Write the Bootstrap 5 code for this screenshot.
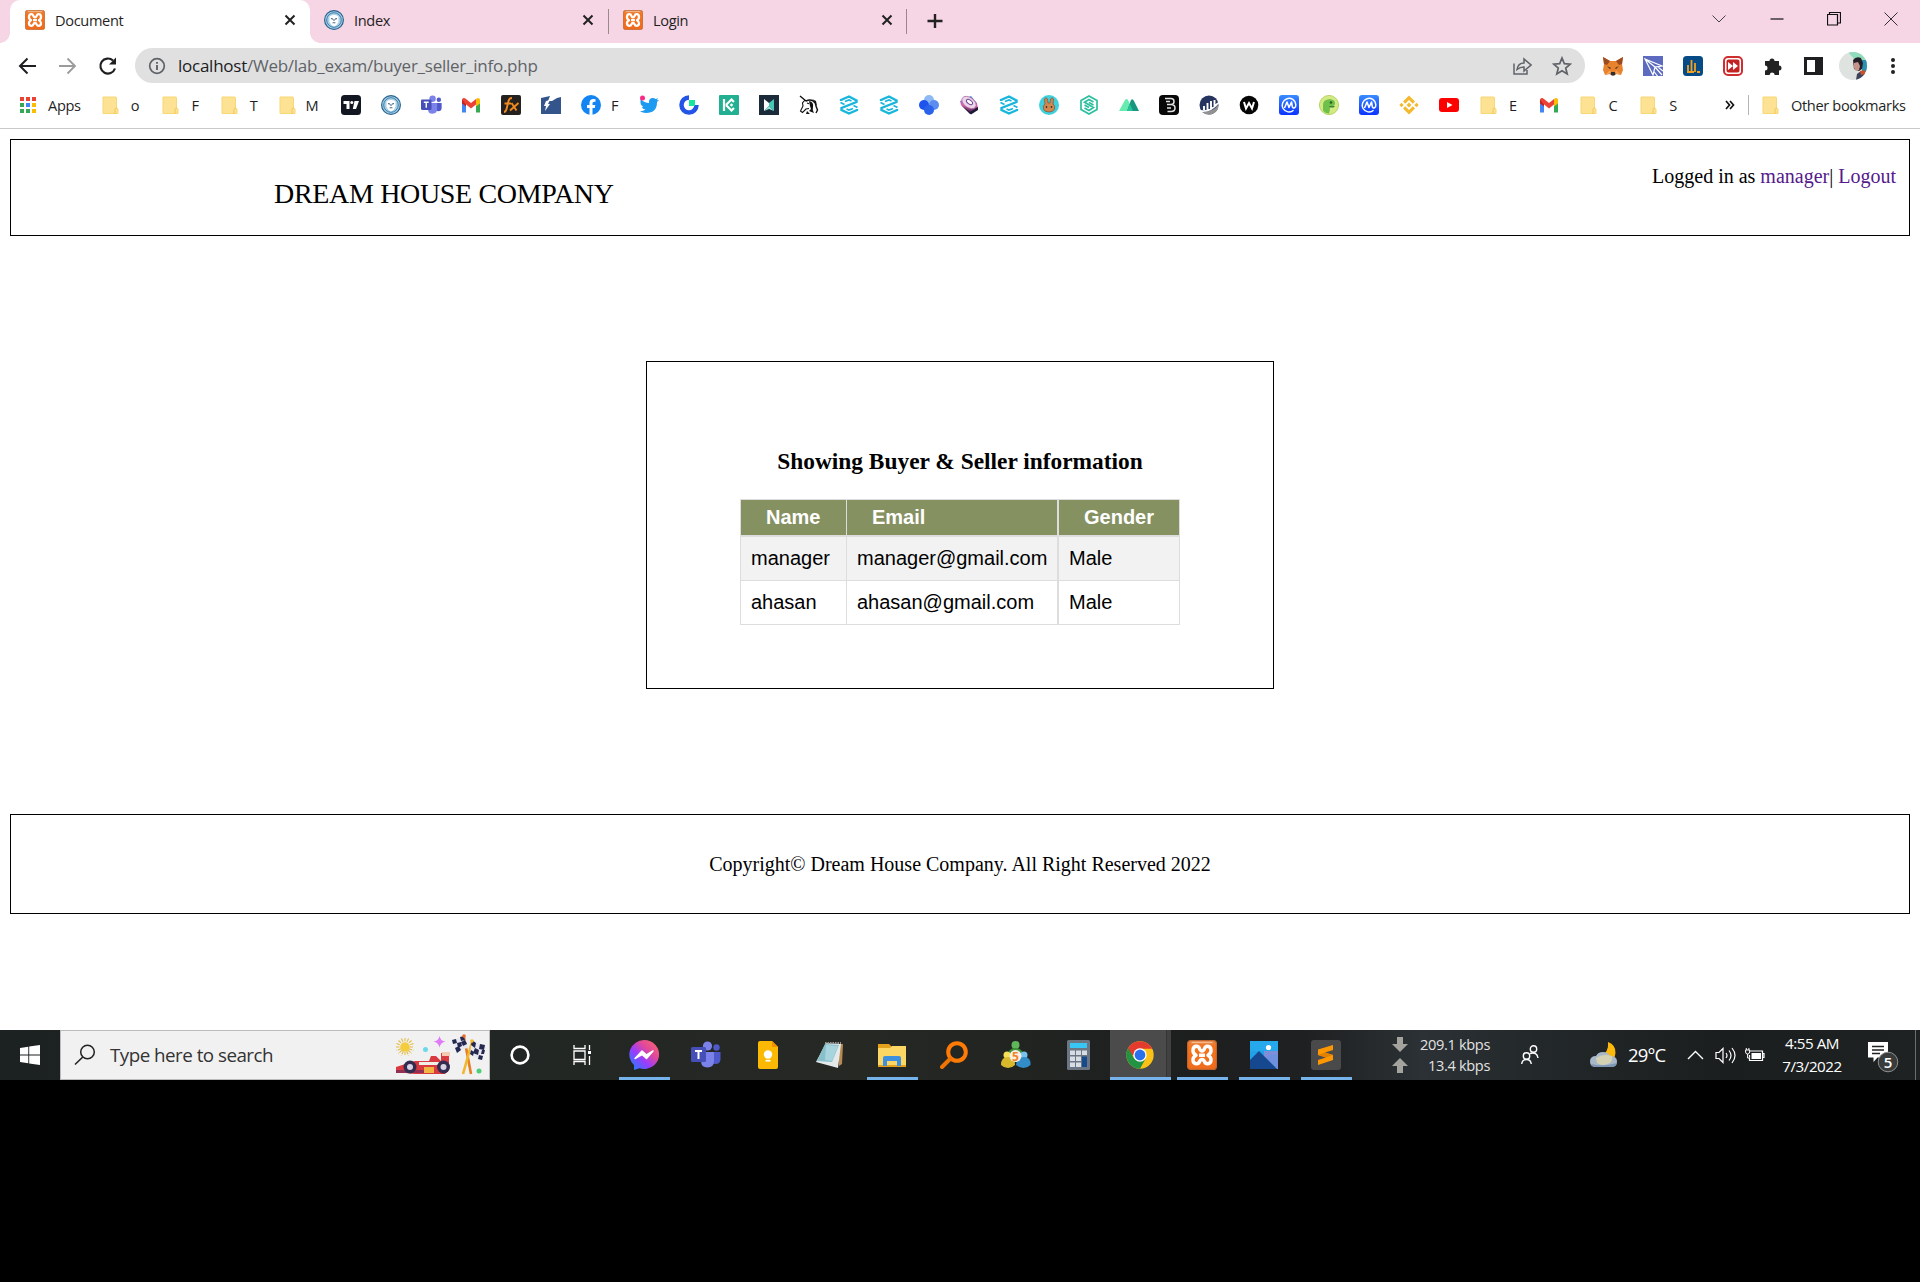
<!DOCTYPE html>
<html lang="en">
<head>
<meta charset="utf-8">
<meta name="viewport" content="width=device-width, initial-scale=1">
<title>Document</title>
<link href="https://cdn.jsdelivr.net/npm/bootstrap@5.3.0/dist/css/bootstrap.min.css" rel="stylesheet">
<style>
  body{background:#000;color:#000;font-family:"Open Sans","Noto Sans",sans-serif;overflow:hidden}
  svg{display:block;flex:none}
  .ui{font-size:14.6px;letter-spacing:-.35px;line-height:20px;color:#1f1f24;white-space:nowrap}
  /* tab strip */
  .strip{height:43px;background:#f6d5e4;padding-left:10px}
  .tabx{height:43px;width:298px;padding:0 14px 3px 14px}
  .tabx .lbl{margin-left:10px;flex:1}
  .tabx.on{background:#fff;border-radius:10px 10px 0 0;width:300px;padding-left:15px;position:relative}
  .tabx.last{width:297px;padding-right:13px}
  .tabx.on::before,.tabx.on::after{content:"";position:absolute;bottom:0;width:10px;height:10px}
  .tabx.on::before{left:-10px;background:radial-gradient(circle at 0 0,transparent 9.5px,#fff 10px)}
  .tabx.on::after{right:-10px;background:radial-gradient(circle at 100% 0,transparent 9.5px,#fff 10px)}
  .vline{width:1px;height:25px;flex:none;background:#9c8791}
  .plus{margin:0 0 1px 18px}
  .winbtn{width:57.4px;height:38px}
  /* toolbar */
  .tools{height:45px;padding:0 0 0 17px}
  .reload{margin:0 2px 0 18px}
  .omni{width:1450px;flex:none;height:35px;border-radius:18px;background:#e0e0e0;margin-left:14px;padding:0 13px}
  .star{margin-left:20px}
  .addr{font-size:17px;letter-spacing:-.25px;color:#5f6368;margin-left:12px}
  .addr b{font-weight:400;color:#1c1c1f}
  .s38{width:40px;display:flex;justify-content:center;flex:none}
  /* bookmarks */
  .marks{height:41px;border-bottom:1px solid #c9c9cb;padding:0 0 6px 18px}
  .sl{width:40px;flex:none;display:flex;justify-content:center}
  .fd{width:60px;flex:none;display:flex;align-items:center;padding-left:11px}
  .fd span{width:24px;text-align:center;margin-left:4px}
  .w58{width:58.5px}
  .w63{width:63px}
  .appsl{width:43px;margin-left:10px}
  .fbl{width:18px}
  .more{margin-left:21px}
  .endl{height:20px;background:#b5b5b8;margin-left:-2px}
  .othf{margin-left:13px}
  .oth{margin-left:12px}
  /* page */
  .page{background:#fff;height:901px;padding:10px 10px 0;font-family:"Liberation Serif",serif;font-size:20px;line-height:22px}
  .top-box{height:97px;border:1px solid #000;padding:0 13px 0 263px}
  .brand{font-size:28px;letter-spacing:-.33px;line-height:32px;padding-top:38px}
  .who{padding-top:25px}
  .who a{color:#551a8b;text-decoration:none}
  .panel{width:628px;height:328px;border:1px solid #000;margin:125px auto 0;padding-top:86px}
  .panel h3{font-size:23.4px;line-height:27px;font-weight:700;margin:0 0 24px;text-align:center}
  .people{width:440px;border-collapse:separate;border-spacing:0;font-family:"Liberation Sans",sans-serif;margin:0 auto;table-layout:fixed;border:solid #ddd;border-width:1px 0 0 1px}
  .people th{background:#869162;color:#fff;height:37px;padding:0 0 1px 25px;border:solid #ddd;border-width:0 1px 2px 0}
  .people td{height:44px;padding:0 0 2px 10px;border:solid #ddd;border-width:0 1px 1px 0;vertical-align:middle}
  .people th:nth-child(2),.people td:nth-child(2){border-right-width:2px}
  .people tbody tr:first-child td{background:#f2f2f2}
  .foot{height:100px;border:1px solid #000;margin-top:125px;padding-top:38px;text-align:center}
  /* taskbar */
  .bar{height:50px;background:linear-gradient(90deg,#1c2121 0,#232724 30%,#262824 45%,#1d1f1f 62%,#1f2021 68%,#2b3135 74%,#23282a 80%,#1b1e1e 90%,#1e2222)}
  .startb{width:60px}
  .find{width:430px;height:50px;background:#f1f1f1;border:1px solid #bbb;padding-left:13px;margin-right:-1px}
  .find span{font-size:18.8px;letter-spacing:-.52px;color:#333;margin-left:14px;flex:1}
  .app{width:62px;height:50px;flex:none;display:flex;align-items:center;justify-content:center}
  .run{background:linear-gradient(#76b3ea,#76b3ea) 50% 100%/51px 3px no-repeat}
  .act{background:linear-gradient(#76b3ea,#76b3ea) 1px 100%/61px 3px no-repeat,linear-gradient(90deg,transparent 1px,#4b4b4b 1px 57px,#353535 57px 58px,#414141 58px)}
  .tray{color:#fff;white-space:nowrap}
  .arr{margin-left:35px}
  .net{margin-left:2px;font-size:14.6px;letter-spacing:-.35px;line-height:21px;text-align:right;color:#e2e2e2;width:80px}
  .ppl{margin-left:31px}
  .wea{margin-left:51px}
  .temp{font-size:18.5px;letter-spacing:-.85px;margin-left:10px;width:42px}
  .chv{margin-left:17px}
  .spk{margin-left:11px}
  .bat{margin-left:9px}
  .clock{margin-left:7px;width:80px;font-size:15.2px;letter-spacing:-.45px;line-height:23px;text-align:center}
  .note{margin:4px 0 0 16px}
  .peek{width:1px;height:50px;background:#6b6e6e;margin-left:15px}
</style>
<script src="https://cdn.jsdelivr.net/npm/bootstrap@5.3.0/dist/js/bootstrap.bundle.min.js"></script>
</head>
<body>
<svg width="0" height="0" class="position-absolute">
  <defs>
    <linearGradient id="or" x2="0" y2="1"><stop offset="0" stop-color="#e08a50"/><stop offset=".2" stop-color="#f5741c"/><stop offset="1" stop-color="#f06a1c"/></linearGradient>
    <linearGradient id="ms" x1="1" y1="0" x2="0" y2="1"><stop offset="0" stop-color="#ff6c68"/><stop offset=".35" stop-color="#e0489a"/><stop offset=".6" stop-color="#9a3cff"/><stop offset="1" stop-color="#0a8cff"/></linearGradient>
    <linearGradient id="cm" x2="0" y2="1"><stop offset="0" stop-color="#3a8bff"/><stop offset="1" stop-color="#0b33ff"/></linearGradient>
    <linearGradient id="su" x2="0" y2="1"><stop offset="0" stop-color="#4a8bd0"/><stop offset=".5" stop-color="#e45fae"/><stop offset="1" stop-color="#1b1836"/></linearGradient>
    <symbol id="xampp" viewBox="0 0 20 20"><rect x=".4" y=".4" width="19.2" height="19.2" rx="2" fill="url(#or)" stroke="#c0642c" stroke-width=".8"/><path d="M3 1.600h14" stroke="#f5b98c" stroke-width="1"/><path d="M6 10.200C3 8.500 3.500 4.200 6.500 4.200C9 4.200 7.800 7.300 10 7.300S11 4.200 13.500 4.200C16.500 4.200 17 8.500 14 10.200C17 12 16.500 15.800 13.500 15.800C11 15.800 12.200 13 10 13S9 15.800 6.500 15.800C3.500 15.800 3 12 6 10.200ZM8 10.200h4" fill="none" stroke="#fff" stroke-width="2.300" stroke-linejoin="round"/></symbol>
    <symbol id="bfly" viewBox="0 0 20 20"><circle cx="10" cy="10" r="9.400" fill="#a9d0e6" stroke="#2a638f" stroke-width="1.200"/><circle cx="10" cy="10" r="7.300" fill="none" stroke="#3d7fab" stroke-width="1"/><path d="M5.500 6.500Q10 3 14.500 6.500V12Q13 15.500 10 16.500Q7 15.500 5.500 12Z" fill="#fff"/><path d="M7 8.500l2 .6M13 8.500l-2 .6M8.600 12.800h2.800M10 9v2" stroke="#4b6c80" stroke-width="1.100"/></symbol>
    <symbol id="fold" viewBox="0 0 17 19"><path d="M1 1h12.500q1 0 1 1v10l1.500 1v4.500H1Z" fill="#fde293" stroke="#f8d775"/><path d="M13 18v-4.500q0-1.500 2-1.500" fill="none" stroke="#eec75c"/></symbol>
    <symbol id="x" viewBox="0 0 12 12"><path d="M1.500 1.500l9 9M10.500 1.500l-9 9" stroke="#222" stroke-width="2"/></symbol>
    <symbol id="teams" viewBox="0 0 30 28"><circle cx="16.500" cy="5" r="4.600" fill="#7b83eb"/><circle cx="25.500" cy="6.500" r="3.200" fill="#5059c9"/><path d="M20 11h9.500v7q0 5-5 5-4 0-4.500-3z" fill="#5059c9"/><path d="M10 11h13v8.500q0 7-6.500 7T10 20z" fill="#7b83eb"/><rect y="6" width="15" height="15" rx="1.500" fill="#464eb8"/><path d="M4 10h7M7.500 10v8" stroke="#fff" stroke-width="2"/></symbol>
    <symbol id="gm" viewBox="0 0 20 16"><path d="M1 3v12.500h4V7z" fill="#4285f4"/><path d="M19 3v12.500h-4V7z" fill="#34a853"/><path d="M1 2.500v4l4 3V3.500z" fill="#c5221f"/><path d="M19 2.500v4l-4 3V3.500z" fill="#fbbc04"/><path d="M1 2.500Q2.500 0 5 2l5 4 5-4v5.500l-5 4-6-5z" fill="#ea4335"/><path d="M15 2q2.500-2 4 .5v2l-4 3z" fill="#fbbc04"/></symbol>
    <symbol id="zz" viewBox="0 0 20 20"><path d="M2 6V5L10 1.500L17.500 5.500V7L2.500 13V15L10 18.500L18 15V14" fill="none" stroke="#19b6dc" stroke-width="2.400"/><path d="M1.500 7.500l4 2M18.500 12.500l-4-2M6 6.500l4-1.500 2.500 1M14 13.500L10 15l-2.500-1" fill="none" stroke="#19b6dc" stroke-width="1.700"/></symbol>
    <symbol id="cmc" viewBox="0 0 20 20"><rect width="20" height="20" rx="3" fill="url(#cm)"/><path d="M5.500 13L8 7l2 5.500L12.500 7l.8 4.500q.5 2 2.200 1.300Q17 12 16.800 9.500A6.800 6.800 0 1 0 14.500 15.300" fill="none" stroke="#fff" stroke-width="1.500" stroke-linejoin="round"/></symbol>
    <clipPath id="av"><circle cx="14" cy="14" r="14"/></clipPath>
  </defs>
</svg>

<!-- browser chrome -->
<div class="bg-white">
  <div class="strip d-flex align-items-center ui">
    <div class="tabx on d-flex align-items-center"><svg width="20" height="20"><use href="#xampp"/></svg><span class="lbl">Document</span><svg width="12" height="12"><use href="#x"/></svg></div>
    <div class="tabx d-flex align-items-center"><svg width="20" height="20"><use href="#bfly"/></svg><span class="lbl">Index</span><svg width="12" height="12"><use href="#x"/></svg></div>
    <span class="vline"></span>
    <div class="tabx last d-flex align-items-center"><svg width="20" height="20"><use href="#xampp"/></svg><span class="lbl">Login</span><svg width="12" height="12"><use href="#x"/></svg></div>
    <span class="vline"></span>
    <svg class="plus" width="20" height="18" viewBox="0 0 20 18"><path d="M10 2v14M2.500 9h15" stroke="#222" stroke-width="2.400"/></svg>
    <div class="d-flex ms-auto align-items-center align-self-start">
      <div class="winbtn d-flex align-items-center justify-content-center"><svg width="14" height="8"><path d="M.5.500l6.500 6.500 6.500-6.500" fill="none" stroke="#444"/></svg></div>
      <div class="winbtn d-flex align-items-center justify-content-center"><svg width="14" height="2"><path d="M.5 1h13" stroke="#111" stroke-width="1.200"/></svg></div>
      <div class="winbtn d-flex align-items-center justify-content-center"><svg width="14" height="14"><path d="M.5 2.500h10v10.500H.5zM2.500 2.500v-2h11v10.500h-3" fill="none" stroke="#111" stroke-width="1.200"/></svg></div>
      <div class="winbtn d-flex align-items-center justify-content-center"><svg width="14" height="14"><path d="M.5.500l13 13M13.500.500l-13 13" stroke="#333"/></svg></div>
    </div>
  </div>

  <div class="tools d-flex align-items-center">
    <svg width="22" height="20" viewBox="0 0 22 20"><path d="M19 10H4M10.500 2.500L3 10l7.500 7.500" fill="none" stroke="#1f1f22" stroke-width="2"/></svg>
    <svg class="ms-3" width="24" height="20" viewBox="0 0 22 20"><path d="M3 10h15M11.500 2.500L19 10l-7.500 7.500" fill="none" stroke="#9b9b9b" stroke-width="1.800"/></svg>
    <svg class="reload" width="22" height="20" viewBox="0 0 22 20"><path d="M18 12.500a7.500 7.500 0 1 1-2-8" fill="none" stroke="#1f1f22" stroke-width="2.200"/><path d="M19 1.500v7h-7z" fill="#1f1f22"/></svg>
    <div class="omni d-flex align-items-center">
      <svg width="18" height="18" viewBox="0 0 18 18"><circle cx="9" cy="9" r="7.300" fill="none" stroke="#5f6368" stroke-width="1.700"/><path d="M9 8v5M9 5v1.800" stroke="#5f6368" stroke-width="1.900"/></svg>
      <span class="addr flex-grow-1"><b>localhost</b>/Web/lab_exam/buyer_seller_info.php</span>
      <svg width="20" height="20" viewBox="0 0 20 20"><path d="M2 7.500V18h13v-4M5 13.500Q6 7 12 7V3l7 6-7 6v-4Q8 11 5 13.500z" fill="none" stroke="#5f6368" stroke-width="1.500"/></svg>
      <svg class="star" width="20" height="20" viewBox="0 0 20 20"><path d="M10 2l2.300 5.600 6 .5-4.600 3.900 1.500 6L10 14.800 4.800 18l1.500-6L1.700 8.100l6-.5z" fill="none" stroke="#5f6368" stroke-width="1.700"/></svg>
    </div>
    <div class="d-flex align-items-center ps-2">
      <div class="s38"><svg width="22" height="20" viewBox="0 0 22 20"><path d="M1 1l7 4h6l7-4-1 7 1 6-2 5-5-1-2 1.500h-2L8 18l-5 1-2-5 1-6z" fill="#e8822c"/><path d="M1 1l7 4-3 4-3-1zM21 1l-7 4 3 4 3-1z" fill="#9b4a20"/><path d="M5 10l4 2-1 1zM17 10l-4 2 1 1zM9 16h4l.5 2.500-1.500 1h-2l-1.500-1z" fill="#33302e"/><path d="M3 19l5-5 1 3zM19 19l-5-5-1 3z" fill="#f3a35a"/></svg></div>
      <div class="s38"><svg width="20" height="20"><rect width="20" height="20" fill="#5c6bc0"/><path d="M2 3l17 7-7 1-2 8zM2 3l10 8M12 11l7 8M15 11l5 4M10.500 15l4 5" stroke="#fff" stroke-width="1.200" fill="none"/></svg></div>
      <div class="s38"><svg width="20" height="20"><rect width="20" height="20" rx="3.500" fill="#064b86"/><path d="M5 16V9M8.500 16V4M12 16V7M4 16h7M14 16h3" stroke="#f0a020" stroke-width="1.800"/></svg></div>
      <div class="s38"><svg width="20" height="20"><rect x="1" y="1" width="18" height="18" rx="4" fill="#fff" stroke="#cf2e2e" stroke-width="2"/><rect x="3.500" y="3.500" width="13" height="13" rx="2" fill="#c22323"/><path d="M5 6l5 4-5 4zM10 6l5 4-5 4z" fill="#fff"/></svg></div>
      <div class="s38"><svg width="20" height="20"><path d="M2 5h4.500a2.500 2.500 0 1 1 5 0H16v4.500a2.500 2.500 0 1 1 0 5V19h-4.300a2.500 2.500 0 0 0-5 0H2v-4.500a2.500 2.500 0 0 0 0-5z" fill="#222"/></svg></div>
      <div class="s38"><svg width="19" height="18"><path d="M1.500 1.500h16v15h-16z" fill="#fff" stroke="#1f1f22" stroke-width="3"/><path d="M11 1h7v16h-7z" fill="#1f1f22"/></svg></div>
      <div class="s38"><svg width="28" height="28"><g clip-path="url(#av)"><path d="M0 0h28v28H0z" fill="#dfe3e0"/><path d="M9 0h19v15L16 8z" fill="#8fdcbc"/><path d="M23 8h5v12h-5z" fill="#2b8fb0"/><path d="M14 8q3-4 8-2l2 5-1 6-3 2-5-2z" fill="#242027"/><path d="M15 11l4-1 2 4-1 4-3 1-2-3z" fill="#c8948a"/><path d="M17 28l1-6 4-3 6 4v5z" fill="#3e435c"/><path d="M21 19l5-1 1 4-5 1z" fill="#c9522f"/></g></svg></div>
      <div class="s38"><svg width="6" height="18"><circle cx="3" cy="3" r="2" fill="#222"/><circle cx="3" cy="9" r="2" fill="#222"/><circle cx="3" cy="15" r="2" fill="#222"/></svg></div>
    </div>
  </div>

  <div class="marks d-flex align-items-center ui">
    <svg width="20" height="18" viewBox="0 0 20 18"><g fill="#ea4335"><path d="M2 1h4v4H2zM8 1h4v4H8zM14 1h4v4h-4z"/></g><path d="M2 7h4v4H2z" fill="#34a853"/><path d="M8 7h4v4H8z" fill="#4285f4"/><path d="M14 7h4v4h-4z" fill="#fbbc04"/><path d="M2 13h4v4H2zM8 13h4v4H8z" fill="#34a853"/><path d="M14 13h4v4h-4z" fill="#fbbc04"/></svg>
    <span class="appsl">Apps</span>
    <div class="fd"><svg width="17" height="19"><use href="#fold"/></svg><span>o</span></div>
    <div class="fd w58"><svg width="17" height="19"><use href="#fold"/></svg><span>F</span></div>
    <div class="fd w58"><svg width="17" height="19"><use href="#fold"/></svg><span>T</span></div>
    <div class="fd w63"><svg width="17" height="19"><use href="#fold"/></svg><span>M</span></div>
    <div class="sl"><svg width="20" height="20"><rect width="20" height="20" rx="3.500" fill="#131722"/><path d="M2.500 6h6v8h-3V9h-3zM13.500 6H18l-3 8h-3.200z" fill="#fff"/><circle cx="10.800" cy="7.500" r="1.500" fill="#fff"/></svg></div>
    <div class="sl"><svg width="20" height="20"><use href="#bfly"/></svg></div>
    <div class="sl"><svg width="21" height="20"><use href="#teams"/></svg></div>
    <div class="sl"><svg width="20" height="16"><use href="#gm"/></svg></div>
    <div class="sl"><svg width="20" height="20"><rect width="20" height="20" rx="2" fill="#24211f"/><path d="M3 17q2 0 2.800-4L7.500 6q.7-3 3.500-3M3.500 8.500H10M10.500 8l5 7.500M17.500 8L9 15.500" stroke="#f28a1e" stroke-width="1.900" fill="none"/></svg></div>
    <div class="sl"><svg width="20" height="20"><path d="M0 3l9-2-2 5h4l5-3 4-1v17H0V9z" fill="#34558b"/><path d="M5 6l4-1-2 4h2l-5 7 1-5H3z" fill="#fff"/></svg></div>
    <div class="sl"><svg width="20" height="20"><circle cx="10" cy="10" r="10" fill="#1385f2"/><path d="M8.500 20v-7H6v-3h2.500V8q0-4 4-4l2 .2v2.500h-1.300q-1.700 0-1.700 1.600V10h2.800l-.5 3h-2.300v7z" fill="#fff"/></svg></div>
    <span class="fbl">F</span>
    <div class="sl"><svg width="20" height="20"><path d="M1.500 4q4 4 8.500 4-.5-5 4-5 1.500 0 2.500 1l2.500-.8-1.200 2L20 5l-2 2q0 11-11 11-3.500 0-6-1.700 3.500 0 5.500-1.700-3-.4-3.800-2.900h1.800Q1.500 10.500 1.500 8z" fill="#1d9bf0"/><circle cx="3.500" cy="3" r="2.500" fill="#f82c86"/></svg></div>
    <div class="sl"><svg width="20" height="20"><path d="M10 2.500A7.500 7.500 0 1 0 17.500 10" fill="none" stroke="#2354e6" stroke-width="4.500"/><path d="M10 5h6v6h-6z" fill="#17e6a1"/></svg></div>
    <div class="sl"><svg width="20" height="20"><rect width="20" height="20" rx="1" fill="#23af91"/><path d="M5 4v12M7 10l5.500-5.500L15 7M7 10l5.500 5.500L15 13" stroke="#fff" stroke-width="2.200" fill="none"/><path d="M12.500 8.200l1.800 1.800-1.800 1.800L10.700 10z" fill="#fff"/></svg></div>
    <div class="sl"><svg width="20" height="20"><rect width="20" height="20" fill="#1c2b3a"/><path d="M5 4l5 4v3l-5 5z" fill="#fff"/><path d="M15 4l-5 4v3l5 5z" fill="#45c9b6"/><path d="M5 16l5-5v3zM10 11v3l5 2z" fill="#8fe6da"/></svg></div>
    <div class="sl"><svg width="20" height="20"><path d="M1 1l6 5q4-2 7 0 3 2 3 5l1.500 4-1.500 3" fill="none" stroke="#111" stroke-width="1.400"/><path d="M6 5L3.500 8 4 11l-2.500 5 2 1.500L7 14l3-.5M8 8l2 .8" fill="none" stroke="#111" stroke-width="1.100"/><path d="M10 6q5 1 4 6-1 3 1 6l-5-2 2-2-1-3zM8 16l3 3H7zM13 4l4 2 1 5q-2-4-5-7z" fill="#111"/></svg></div>
    <div class="sl"><svg width="20" height="20"><use href="#zz"/></svg></div>
    <div class="sl"><svg width="20" height="20"><use href="#zz"/></svg></div>
    <div class="sl"><svg width="20" height="20"><circle cx="10" cy="5" r="5" fill="#8db9f5"/><circle cx="15" cy="10" r="5" fill="#5b8df0"/><circle cx="5" cy="10" r="5" fill="#1f54ec"/><circle cx="10" cy="15" r="5" fill="#2b62ea"/></svg></div>
    <div class="sl"><svg width="20" height="20"><path d="M1 6L12 1l6 7 1 6-8 5-9-9z" fill="url(#su)"/><path d="M2 10l9 7 8-5v3l-7 4.500z" fill="#1c1836"/><ellipse cx="10" cy="7.500" rx="8" ry="5" transform="rotate(35 10 7.500)" fill="#eed3ea" stroke="#a1699f" stroke-width=".7"/><ellipse cx="10.500" cy="7" rx="3.500" ry="1.900" transform="rotate(35 10.500 7)" fill="#fff" stroke="#6b4d92"/></svg></div>
    <div class="sl"><svg width="20" height="20"><use href="#zz"/></svg></div>
    <div class="sl"><svg width="20" height="20"><circle cx="10" cy="10" r="10" fill="#40cfdd"/><path d="M6 9L5.500 4Q7 1.500 8.500 4l.5 4h2l.5-4Q13 1.500 14.500 4L14 9q2.500 2 1.500 5-1 3-5.500 3t-5.500-3q-1-3 1.500-5z" fill="#d1884f" stroke="#7b5036" stroke-width=".7"/><path d="M7.500 11v2M12.500 11v2" stroke="#4b2f24" stroke-width="1.300"/></svg></div>
    <div class="sl"><svg width="20" height="20"><path d="M10 1l8 4.500v9L10 19l-8-4.500v-9zM14.500 7L10 4.500 5.500 7.200l9 5.300L10 15.500 5.500 13M5.500 10L10 12.500M10 7.500l4.500 2.500" fill="none" stroke="#2abf9e" stroke-width="1.700"/></svg></div>
    <div class="sl"><svg width="20" height="20"><path d="M0 16L6 5q1.500-2 3 0l5 11z" fill="#66ecb0"/><path d="M8 16L12 5q1.500-2 3 1l5 10z" fill="#18967f"/><path d="M8 16l3-7 3 7z" fill="#29c49a"/></svg></div>
    <div class="sl"><svg width="20" height="20"><rect width="20" height="20" rx="4" fill="#080808"/><path d="M6 3.500h6q3 0 3 3T12 9.500q4 0 4 3.500t-4 3.500H8.500M7 6.500h4M8 9.500h4M8 13h4" fill="none" stroke="#e3e3e3" stroke-width="1.500"/></svg></div>
    <div class="sl"><svg width="20" height="20"><circle cx="10" cy="10" r="9.500" fill="#25335f"/><path d="M3 17Q15 17 19.500 9 20 17 12 19.500 6 20 3 17z" fill="#929292"/><path d="M5 15v-4M8.500 15V8M12 14V6M15.500 12V5M2 16q10 1 17-8" stroke="#fff" stroke-width="1.900" fill="none"/></svg></div>
    <div class="sl"><svg width="20" height="20"><circle cx="10" cy="10" r="9.300" fill="#050505"/><path d="M5 7l2 6.500L10 8l3 5.500L15 7" fill="none" stroke="#fff" stroke-width="2"/></svg></div>
    <div class="sl"><svg width="20" height="20"><use href="#cmc"/></svg></div>
    <div class="sl"><svg width="20" height="20"><circle cx="10" cy="10" r="9.600" fill="#d3e983" stroke="#a9cc4d" stroke-width=".8"/><path d="M4 10q0-5 5-5.500 1.500-1 3.500 0 4 .8 3.500 4.500-1 2.500-5 3 0 4-1 6.500-4 0-6-3z" fill="#6fc04a"/><path d="M10 11h6l-1.500 1.500H11z" fill="#3b8132"/><circle cx="12" cy="7.500" r="1.300" fill="#2c5b28"/></svg></div>
    <div class="sl"><svg width="20" height="20"><use href="#cmc"/></svg></div>
    <div class="sl"><svg width="20" height="20"><path d="M10 7.500l2.500 2.500-2.500 2.500L7.500 10zM2.500 7.800L4.700 10l-2.200 2.200L.3 10zM17.500 7.800l2.200 2.200-2.200 2.200-2.200-2.200zM10 .5l6 6-2.200 2.200L10 5 6.200 8.700 4 6.500zM10 19.500l6-6-2.200-2.200L10 15l-3.800-3.700L4 13.500z" fill="#f3ba2f"/></svg></div>
    <div class="sl"><svg width="20" height="20"><rect y="3" width="20" height="14" rx="3" fill="#f00"/><path d="M8 7l5.500 3L8 13z" fill="#fff"/></svg></div>
    <div class="fd"><svg width="17" height="19"><use href="#fold"/></svg><span>E</span></div>
    <div class="sl"><svg width="20" height="16"><use href="#gm"/></svg></div>
    <div class="fd"><svg width="17" height="19"><use href="#fold"/></svg><span>C</span></div>
    <div class="fd"><svg width="17" height="19"><use href="#fold"/></svg><span>S</span></div>
    <div class="more sl"><svg width="10" height="10"><path d="M1 1l3.500 4L1 9M5 1l3.500 4L5 9" fill="none" stroke="#111" stroke-width="1.700"/></svg></div>
    <span class="vline endl"></span>
    <svg class="othf" width="17" height="19"><use href="#fold"/></svg><span class="oth">Other bookmarks</span>
  </div>
</div>

<!-- web page -->
<main class="page">
  <header class="top-box d-flex justify-content-between">
    <div class="brand">DREAM HOUSE COMPANY</div>
    <div class="who">Logged in as <a href="#">manager</a>| <a href="#">Logout</a></div>
  </header>
  <section class="panel">
    <h3>Showing Buyer &amp; Seller information</h3>
    <table class="people">
      <colgroup><col width="106"><col width="212"><col width="121"></colgroup>
      <thead><tr><th>Name</th><th>Email</th><th>Gender</th></tr></thead>
      <tbody>
        <tr><td>manager</td><td>manager@gmail.com</td><td>Male</td></tr>
        <tr><td>ahasan</td><td>ahasan@gmail.com</td><td>Male</td></tr>
      </tbody>
    </table>
  </section>
  <footer class="foot">Copyright© Dream House Company. All Right Reserved 2022</footer>
</main>

<!-- taskbar -->
<div class="bar d-flex align-items-center">
  <div class="startb d-flex justify-content-center"><svg width="20" height="20"><path d="M0 3l8.300-1.200v7.700H0zM9.200 1.600L20 0v9.500H9.200zM0 10.500h8.300v7.700L0 17zM9.200 10.500H20V20L9.200 18.400z" fill="#fff"/></svg></div>
  <div class="find d-flex align-items-center">
    <svg width="22" height="22"><circle cx="13.500" cy="8" r="6.800" fill="none" stroke="#222" stroke-width="1.500"/><path d="M8.800 13L1 20.500" stroke="#222" stroke-width="1.600"/></svg>
    <span>Type here to search</span>
    <svg width="94" height="48" viewBox="0 0 94 48"><path d="M10 7v18M1 16h18M3.500 9.500l13 13M16.500 9.500l-13 13M6.500 7.500l7 17M13.500 7.500l-7 17M1.500 12.500l17 7M18.500 12.500l-17 7" stroke="#e2bd45" stroke-width="1.100" stroke-dasharray="3.500 1"/><circle cx="10" cy="16" r="4.600" fill="#f5cc3b"/><path d="M44.500 5q1 5 6 5.500-5 1-6 6-1-5-6-6 5-.5 6-5.500z" fill="#e07bf7"/><circle cx="30.500" cy="18.500" r="2.500" fill="#6bd9ea"/>
    <path d="M1 41v-5l19-6h14l2-5h5l5 5V22h8v17l-4 4H20z" fill="#d93a40"/><path d="M24 31h20v3H24z" fill="#f2efe9"/><path d="M29 36h10v6H29z" fill="#f2b541"/><path d="M47 21h8v4h-8z" fill="#f3cab4"/><path d="M1 39h28v3H1z" fill="#932e55"/><circle cx="15" cy="36" r="6.500" fill="#332b50"/><circle cx="15" cy="36" r="3" fill="#d8d3e4"/><circle cx="48.500" cy="36" r="6.500" fill="#332b50"/><circle cx="48.500" cy="36" r="3" fill="#d8d3e4"/>
    <path d="M69 6l7 37" stroke="#e67f21" stroke-width="2.600"/><path d="M77 11l-9 32" stroke="#f3b72c" stroke-width="2.600"/><path d="M57 9q5-1 12-4l4 12q-7 1-11 5z" fill="#e8e8f0"/><path d="M77 9q7 5 14 5l-4 15q-6-1-12-6z" fill="#e8e8f0"/><path d="M57 9l4-1 1 4-4 1zM65 6l4-1 1 4-4 1zM62 12l4-1 1 4-4 2zM60 17l4-2 2 4-4 3zM70 9l2 4-4 2-2-4zM77 9l4 3-1 5-4-3zM85 13l5 1-1 5-5-1zM80 17l4 2-1 5-5-2zM84 24l4 1-1 4-4-1zM76 19l3 2-1 4-3-2zM87 19h3l-1 4h-3z" fill="#25284f"/><circle cx="69" cy="5" r="1.800" fill="#ec6a2b"/><circle cx="77" cy="10" r="1.800" fill="#f4bd2e"/><circle cx="84" cy="40" r="2.500" fill="#4ccf78"/></svg>
  </div>
  <div class="app"><svg width="20" height="20"><circle cx="10" cy="10" r="8.400" fill="none" stroke="#fff" stroke-width="2.600"/></svg></div>
  <div class="app"><svg width="22" height="20"><path d="M3 0v3.500h11V0M3 20v-3.500h11V20M3 6h11v8.500H3zM18.500 0v5M18.500 11v9" fill="none" stroke="#fff" stroke-width="1.300"/><path d="M17 6h3v3h-3z" fill="#fff"/></svg></div>
  <div class="app run"><svg width="30" height="30"><path d="M15 0a15 14.500 0 1 1-4.500 28.300L5 30v-5A15 14.500 0 0 1 15 0z" fill="url(#ms)"/><path d="M6 18.500l7-7.500 4.500 4 6.500-4-6.500 7.500-4.500-4z" fill="#fff" stroke="#fff" stroke-width="1.500" stroke-linejoin="round"/></svg></div>
  <div class="app"><svg width="30" height="28"><use href="#teams"/></svg></div>
  <div class="app"><svg width="20" height="28"><path d="M2 0h12l6 6v20q0 2-2 2H2q-2 0-2-2V2Q0 0 2 0z" fill="#fbb904"/><path d="M14 0l6 6h-6z" fill="#f29100"/><circle cx="10" cy="13.500" r="4.200" fill="#fff"/><path d="M7.500 19.700h5" stroke="#fff" stroke-width="1.800"/></svg></div>
  <div class="app"><svg width="28" height="28"><path d="M23 3h4l-1 20-3 2z" fill="#b88a52"/><path d="M0 21L10 2l15 1-3 24z" fill="#e4e9ea"/><path d="M9 3l14 1-7 17L1 20z" fill="#87bfcb"/><path d="M10 4l12 1-6 15-7-1z" fill="#a8d5dd"/><path d="M9 2h16" stroke="#999" stroke-width="2" stroke-dasharray="1.500 1"/></svg></div>
  <div class="app run"><svg width="28" height="26"><path d="M0 2h11l3 3h14v20H0z" fill="#e4a11b"/><path d="M0 6h12l2-2h14v19H0z" fill="#fbd665"/><path d="M5 24V16q0-2 2-2h14q2 0 2 2v8h-4v-5H9v5z" fill="#3c90dd"/></svg></div>
  <div class="app"><svg width="28" height="28"><circle cx="17" cy="11" r="8.800" fill="none" stroke="#ff7b05" stroke-width="4"/><path d="M10.500 17.500L2 26" stroke="#f07304" stroke-width="4" stroke-linecap="round"/></svg></div>
  <div class="app"><svg width="30" height="30" viewBox="0 0 30 30"><circle cx="14.500" cy="5" r="4" fill="#5fb65b"/><path d="M6 17q1-9 8.500-9t8.500 9z" fill="#3d9138"/><circle cx="6" cy="15" r="3.500" fill="#f5e055"/><path d="M0 25q0-8 7-8t7 8q-3 3-7 3t-7-3z" fill="#d8b92c"/><circle cx="23" cy="15" r="3.500" fill="#77c2ee"/><path d="M15 25q1-8 8-8t6.500 8q-3 3-7 3t-7.500-3z" fill="#318cc8"/><circle cx="14.500" cy="16" r="6" fill="#f7efe4"/><text x="14.500" y="20.500" font-size="12" font-weight="700" text-anchor="middle" fill="#f08526">5</text></svg></div>
  <div class="app"><svg width="23" height="30"><rect width="23" height="30" rx="1.500" fill="#6c7683"/><path d="M3 3h17v5H3z" fill="#38c6f4"/><path d="M3 10.500h5v4.500H3zM9 10.500h5v4.500H9zM15 10.500h5v4.500h-5zM3 16.500h5V21H3zM9 16.500h5V21H9zM3 22.500h5V27H3zM9 22.500h5V27H9z" fill="#d6dde6"/><path d="M15 16.500h5V27h-5z" fill="#174a8c"/></svg></div>
  <div class="app act"><svg width="28" height="28" viewBox="0 0 28 28"><circle cx="14" cy="14" r="13.700" fill="#fbc116"/><path d="M14 14H2.500L2.100 7.100A13.700 13.700 0 0 1 25.900 7.100L26 7.800H14z" fill="#e33b2e"/><path d="M2.100 7.100A13.700 13.700 0 0 0 14 27.700L20 17l-6 3-6-3z" fill="#229342"/><circle cx="14" cy="14" r="6.700" fill="#fff"/><circle cx="14" cy="14" r="5.400" fill="#2a70ec"/></svg></div>
  <div class="app run"><svg width="30" height="30"><use href="#xampp"/></svg></div>
  <div class="app run"><svg width="28" height="28"><path d="M0 0h28v28H0z" fill="#22a0e8"/><path d="M14 10h14v18H14z" fill="#7e8fda"/><path d="M0 0h28v10H0z" fill="#25a9ec"/><path d="M28 13v15H18l-3-9 5-5z" fill="#6f90de"/><path d="M0 19l9-9 18 18H0z" fill="#15488f"/><circle cx="18.500" cy="6.500" r="2.600" fill="#fff"/></svg></div>
  <div class="app run"><svg width="30" height="30"><rect width="30" height="30" rx="3" fill="#4a4a4a"/><path d="M7 9.500L22 5v5l-8 2.500 8 2.500v5L7 25v-5l8-2.500L7 15z" fill="#ff9800"/><path d="M7 15l8 2.500 7-2.500-8-2.500z" fill="#e08200"/></svg></div>
  <div class="tray d-flex align-items-center">
    <svg class="arr" width="16" height="38"><path d="M5 1h6v7h5l-8 8-8-8h5z" fill="#a5a39e"/><path d="M5 37h6v-7h5l-8-8-8 8h5z" fill="#a5a39e"/></svg>
    <div class="net">209.1 kbps<br>13.4 kbps</div>
    <svg class="ppl" width="18" height="20"><circle cx="12.500" cy="4" r="3.200" fill="none" stroke="#fff" stroke-width="1.400"/><circle cx="5.500" cy="11" r="3.200" fill="none" stroke="#fff" stroke-width="1.400"/><path d="M.7 19q.5-4.500 4.800-4.500T10.300 19M9 8.500q7-2 8 4.500" fill="none" stroke="#fff" stroke-width="1.400"/></svg>
    <svg class="wea" width="28" height="26"><path d="M18 0q8 3 7.500 11T17 19l-6-5q8-4 7-14z" fill="#fcb90b"/><path d="M6 25q-6 0-6-5.500T6 14q2-4 7-4t7 4q7 0 7 5.500T21 25z" fill="#a9b8c9"/><path d="M7 21q6 4 13 0 3-3 2-7-9-3-16 2z" fill="#d5d2b4"/><path d="M1 22q12 3 26-1-1 4-6 4H6q-4 0-5-3z" fill="#7e97b4"/></svg>
    <span class="temp">29°C</span>
    <svg class="chv" width="17" height="10"><path d="M1 9l7.500-7.500L16 9" fill="none" stroke="#fff" stroke-width="1.400"/></svg>
    <svg class="spk" width="21" height="17"><path d="M1 5.500h3l4-4v14l-4-4H1z" fill="none" stroke="#fff" stroke-width="1.200"/><path d="M11 6q2 2.500 0 5M14 3.500q4 5 0 10M17 1q6 7.500 0 15" fill="none" stroke="#fff" stroke-width="1.200"/></svg>
    <svg class="bat" width="20" height="14"><path d="M5 3h12.500v9.500h-13V7M17.500 5.500H19v4h-1.500" fill="none" stroke="#fff" stroke-width="1.200"/><path d="M6.500 5h9.500v6H6.500z" fill="#fff"/><path d="M.6 2h4v2q0 2-2 2t-2-2zM1.300 0v2M3.900 0v2M2.600 6v4h2" fill="#222" stroke="#fff" stroke-width="1"/></svg>
    <div class="clock">4:55 AM<br>7/3/2022</div>
    <svg class="note" width="32" height="32"><path d="M0 1h20v15.500H9.500L5.500 21v-4.500H0z" fill="#fff"/><path d="M4 5.500h12M4 9h12M4 12.500h8" stroke="#222" stroke-width="1.300"/><circle cx="20" cy="21" r="9.800" fill="#3a3c3c" stroke="#8d8f8f"/><text x="20" y="26.500" font-size="15" font-weight="600" text-anchor="middle" fill="#fff">5</text></svg>
    <span class="peek"></span>
  </div>
</div>
</body>
</html>
